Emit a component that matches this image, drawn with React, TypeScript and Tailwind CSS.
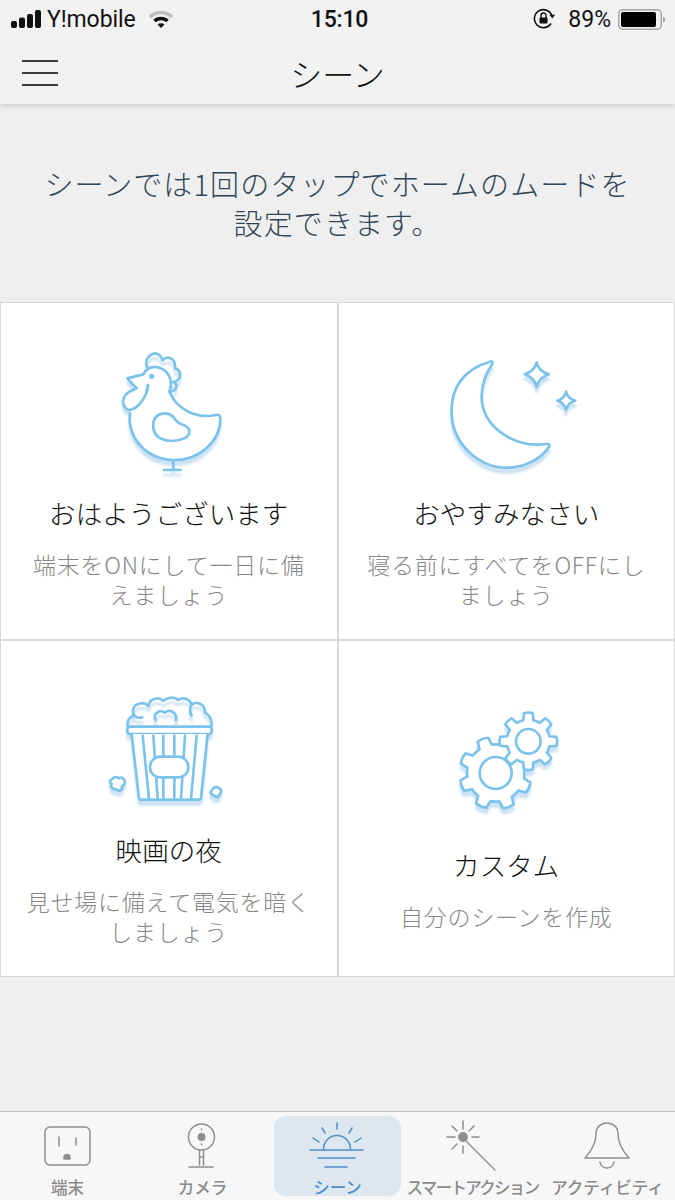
import React from "react";

const BLUE = "#7cc3ec";

function gear(cx: number, cy: number, rOut: number, rRoot: number, teeth: number, rot: number) {
  const pts: string[] = [];
  const step = (Math.PI * 2) / teeth;
  const p = (r: number, a: number) => `${(cx + r * Math.cos(a)).toFixed(1)} ${(cy + r * Math.sin(a)).toFixed(1)}`;
  for (let i = 0; i < teeth; i++) {
    const a = rot + i * step;
    const w = step * 0.2;
    const b = step * 0.3;
    pts.push(`${i === 0 ? "M" : "L"}${p(rRoot, a - b)}`);
    pts.push(`L${p(rOut, a - w)}`);
    pts.push(`Q${p(rOut + 4, a)} ${p(rOut, a + w)}`);
    pts.push(`L${p(rRoot, a + b)}`);
    const mid = a + step / 2;
    pts.push(`Q${p(rRoot + 1, mid)} ${p(rRoot, a + step - b)}`);
  }
  return pts.join(" ") + "Z";
}

const art = "drop-shadow-[0_5px_1px_rgba(124,180,220,0.38)] blur-[0.4px]";

function Chicken() {
  return (
    <svg width="160" height="150" viewBox="0 0 480 450" className={`mt-[5px] ml-[3px] ${art}`} fill="none" stroke={BLUE} strokeWidth="8" strokeLinecap="round" strokeLinejoin="round">
      <path fill="#fff" d="M120 235C112 300 160 372 250 375C325 377 392 320 391 250C391 241 386 238 378 240C320 252 262 225 238 170C250 140 238 112 215 101C195 91 172 95 160 118L112 130L140 160" />
      <path fill="#fff" d="M175 152C170 185 145 222 118 225C100 222 92 195 108 178C118 168 130 165 140 160" />
      <path d="M172 97C160 72 185 48 205 58C215 66 217 72 217 76C232 60 258 68 255 100C275 105 278 135 250 141C268 150 258 168 240 170" />
      <path d="M190 265C193 238 225 225 250 245C258 262 272 268 285 272C306 282 302 305 275 313C235 325 185 315 190 265Z" />
      <circle cx="185" cy="124" r="4" />
      <path d="M173 150C173 158 172 164 169 170" />
      <path d="M250 377V405M222 405H272" />
    </svg>
  );
}

function Moon() {
  return (
    <svg width="160" height="135" viewBox="0 0 480 405" className={`mt-[15px] ml-[7px] ${art}`} fill="none" stroke={BLUE} strokeWidth="8" strokeLinecap="round" strokeLinejoin="round">
      <path fill="#fff" d="M180 50C100 72 62 130 65 205C68 300 150 370 235 368C290 365 335 340 358 304C360 297 355 295 348 297C250 312 150 240 155 150C157 110 170 80 187 57C189 50 185 48 180 50Z" />
      <path fill="#fff" d="M320 52Q326 78 356 88Q326 98 320 126Q314 98 284 88Q314 78 320 52Z" />
      <path fill="#fff" d="M408 140Q412 160 436 167Q412 174 408 194Q404 174 382 167Q404 160 408 140Z" />
    </svg>
  );
}

function Popcorn() {
  return (
    <svg width="140" height="135" viewBox="0 0 420 405" className={`mt-[17px] ml-[-7px] ${art}`} fill="none" stroke={BLUE} strokeWidth="8" strokeLinecap="round" strokeLinejoin="round">
      <path d="M99 128C93 112 105 97 118 95C108 78 118 62 130 60C142 55 152 58 160 66C162 45 190 36 205 50C220 38 240 38 250 48C265 38 285 45 290 62C305 50 330 60 330 85C345 95 352 110 349 128" />
      <path d="M118 95C124 102 134 102 142 100M290 62C284 72 284 85 290 95" />
      <path d="M182 108C172 88 195 74 210 86C225 74 248 86 243 108" />
      <rect x="97" y="128" width="253" height="22" rx="8" fill="#fff" />
      <path fill="#fff" d="M110 150L132 342Q133 347 138 347H312Q317 347 318 342L338 150" />
      <path d="M143 155L162 345M175 155L188 345M205 155V215M205 282V345M238 155V215M238 282V345M270 155L258 345M305 155L288 345" />
      <rect x="165" y="218" width="115" height="62" rx="30" fill="#fff" />
      <path fill="#fff" d="M52 285C60 275 70 282 72 283C80 277 90 285 90 295C90 303 82 305 80 307C84 318 72 324 64 316C54 318 44 308 50 300C42 296 44 288 52 285Z" />
      <path fill="#fff" d="M355 312C364 306 380 312 378 324C376 330 372 332 368 340C362 338 352 334 346 326C348 320 352 320 355 312Z" />
    </svg>
  );
}

function Gears() {
  return (
    <svg width="125" height="125" viewBox="0 0 375 375" className={`mt-[17px] ml-[2px] ${art}`} fill="none" stroke={BLUE} strokeWidth="8" strokeLinecap="round" strokeLinejoin="round">
      <path fill="#fff" d={gear(152, 222, 108, 86, 8, 0.42)} />
      <circle cx="152" cy="222" r="48" />
      <path fill="#fff" d={gear(250, 127, 85, 65, 8, 0)} />
      <circle cx="250" cy="127" r="37" />
    </svg>
  );
}

function Cell({ icon, title, text }: { icon: React.ReactNode; title: string; text: string }) {
  return (
    <div className="border border-[#d8d8d8] bg-white flex flex-col items-center justify-center">
      <div className="h-[156px] w-full flex flex-col items-center">{icon}</div>
      <div className="h-[54px] text-[26.5px] leading-[54px] tracking-[0.1px] text-[#111111] whitespace-nowrap font-light">{title}</div>
      <div className="mt-[9px] mb-[3px] text-center text-[23px] leading-[30px] tracking-[0.75px] text-[#888888] whitespace-pre font-light">
        {text}
      </div>
    </div>
  );
}

const GR = "#8f8f8f";

function Tab({ label, active, small, children }: { label: string; active?: boolean; small?: boolean; children: React.ReactNode }) {
  return (
    <div className="w-[135px] flex flex-col items-center relative">
      <div className={`w-[127px] h-[80px] rounded-[12px] flex flex-col items-center ${active ? "bg-[#dce7f0]" : ""}`}>
        <svg width="127" height="61" viewBox="4 0 127 61" className="shrink-0" fill="none" stroke={active ? "#4f8fc8" : GR} strokeWidth="1.5" strokeLinecap="round" strokeLinejoin="round">
          {children}
        </svg>
        <div className={`text-[16.5px] leading-[20px] font-medium whitespace-nowrap ${active ? "text-[#4f8fc8]" : "text-[#8a8a8a]"} ${small ? "tracking-[-1.7px]" : ""}`}>
          {label}
        </div>
      </div>
    </div>
  );
}

export default function App() {
  return (
    <div className="w-[675px] h-[1200px] flex flex-col bg-[#efefef] overflow-hidden font-['Noto_Sans_CJK_JP','Noto_Sans',sans-serif]">
      <header className="h-[104px] bg-[#f2f2f2] shadow-[0_2px_5px_rgba(0,0,0,0.14)] relative z-10 flex flex-col shrink-0">
        <div className="h-[38px] grid grid-cols-[1fr_auto_1fr] items-center px-[11px] text-[#111] font-['Roboto',sans-serif] text-[23px]">
          <div className="flex items-center">
            <svg width="30" height="18" viewBox="0 0 30 18" fill="#111">
              <rect x="0" y="11" width="6" height="7" rx="2" />
              <rect x="8" y="7.5" width="6" height="10.5" rx="2" />
              <rect x="16" y="4" width="6" height="14" rx="2" />
              <rect x="24" y="0" width="6" height="18" rx="2" />
            </svg>
            <span className="ml-[6px] leading-[30px] tracking-[-0.1px] mt-[1px]">Y!mobile</span>
            <svg width="26" height="19" viewBox="0 0 26 19" className="ml-[12px]" fill="none" strokeLinecap="butt">
              <path d="M2 7C8 1 18 1 24 7" stroke="#bcbcbc" strokeWidth="3.5" />
              <path d="M6.5 11C10 7.5 16 7.5 19.5 11" stroke="#111" strokeWidth="3.5" />
              <path d="M13 18L9.5 14.5C11.5 12.8 14.5 12.8 16.5 14.5Z" fill="#111" />
            </svg>
          </div>
          <div className="font-medium leading-[30px] ml-[3px] mr-[-1px] tracking-[-0.2px] mt-[1px]">15:10</div>
          <div className="flex items-center justify-end">
            <svg width="23" height="22" viewBox="0 0 23 22" fill="none" stroke="#111" strokeWidth="1.6">
              <path d="M18 15.5A9 9 0 1 1 19 8" />
              <path d="M16.5 7L19.5 10.5L22 6.5Z" fill="#111" stroke="none" />
              <rect x="6.5" y="9.5" width="8" height="6" rx="1" fill="#111" stroke="none" />
              <path d="M8 10V7.5A2.5 2.5 0 0 1 13 7.5V10" strokeWidth="1.4" />
            </svg>
            <span className="ml-[12px] leading-[30px] mt-[1px]">89%</span>
            <svg width="48" height="21" viewBox="0 0 48 21" className="ml-[7px] mr-[-2px]">
              <rect x="0.75" y="0.75" width="42.5" height="19.5" rx="4" fill="none" stroke="#a3a3a3" strokeWidth="1.5" />
              <rect x="3" y="3" width="35" height="15" rx="2" fill="#000" />
              <path d="M45 7.5C46.5 8 47 9 47 10.5C47 12 46.5 13 45 13.5Z" fill="#a3a3a3" />
            </svg>
          </div>
        </div>
        <div className="flex-1 grid grid-cols-[1fr_auto_1fr] items-center pt-[3px]">
          <div className="pl-[22px] flex flex-col gap-[10px]">
            <div className="w-[36px] h-[2px] bg-[#3a3a3a]" />
            <div className="w-[36px] h-[2px] bg-[#3a3a3a]" />
            <div className="w-[36px] h-[2px] bg-[#3a3a3a]" />
          </div>
          <div className="text-[32px] leading-[44px] text-[#111111] font-light">シーン</div>
          <div />
        </div>
      </header>

      <div className="h-[198px] shrink-0 flex items-center justify-center text-center text-[29px] leading-[39px] tracking-[1.1px] text-[#2f4659] whitespace-pre font-light">
        {"シーンでは1回のタップでホームのムードを\n設定できます。"}
      </div>

      <div className="h-[675px] shrink-0 grid grid-cols-2 grid-rows-2">
        <Cell icon={<Chicken />} title="おはようございます" text={"端末をONにして一日に備\nえましょう"} />
        <Cell icon={<Moon />} title="おやすみなさい" text={"寝る前にすべてをOFFにし\nましょう"} />
        <Cell icon={<Popcorn />} title="映画の夜" text={"見せ場に備えて電気を暗く\nしましょう"} />
        <Cell icon={<Gears />} title="カスタム" text="自分のシーンを作成" />
      </div>

      <div className="flex-1" />

      <nav className="h-[89px] shrink-0 border-t border-[#bdbdbd] bg-[#f7f7f7] flex pt-[4px]">
        <Tab label="端末">
          <rect x="45" y="11" width="45" height="38" rx="5" />
          <path d="M59 21V30M76 22V29" />
          <path d="M64 43V41.5A3 3 0 0 1 70 41.5V43Z" fill={GR} />
        </Tab>
        <Tab label="カメラ">
          <circle cx="66.5" cy="21" r="13" />
          <circle cx="66.5" cy="21" r="3.2" fill={GR} />
          <path d="M66.5 13V13.6M66.5 28V28.6" />
          <path d="M64.5 34V49M68.5 34V49M64.5 41H68.5" />
          <path d="M54 51H78" />
        </Tab>
        <Tab label="シーン" active>
          <path d="M40 34H93M48 42H85M55 51H77" />
          <path d="M53.5 33A13.5 13.5 0 0 1 80.5 33" />
          <path d="M67 7V13M52 12L55 17M43 22L49 26M82 12L79 17M91 22L85 26" />
        </Tab>
        <Tab label="スマートアクション" small>
          <circle cx="58" cy="21" r="4.2" fill={GR} />
          <path d="M60 24L90 54" />
          <path d="M58 5V13M58 30V37M42 21H50M67 21H74M47 10L52 15M69 10L64 15M47 33L52 28" />
        </Tab>
        <Tab label="アクティビティ">
          <path d="M45 42C54 32 56 25 56 18C56 11 61 7 67 7C73 7 78 11 78 18C78 25 80 32 89 42Z" />
          <path d="M60 46C61 54 73 54 74 46" />
        </Tab>
      </nav>
    </div>
  );
}
